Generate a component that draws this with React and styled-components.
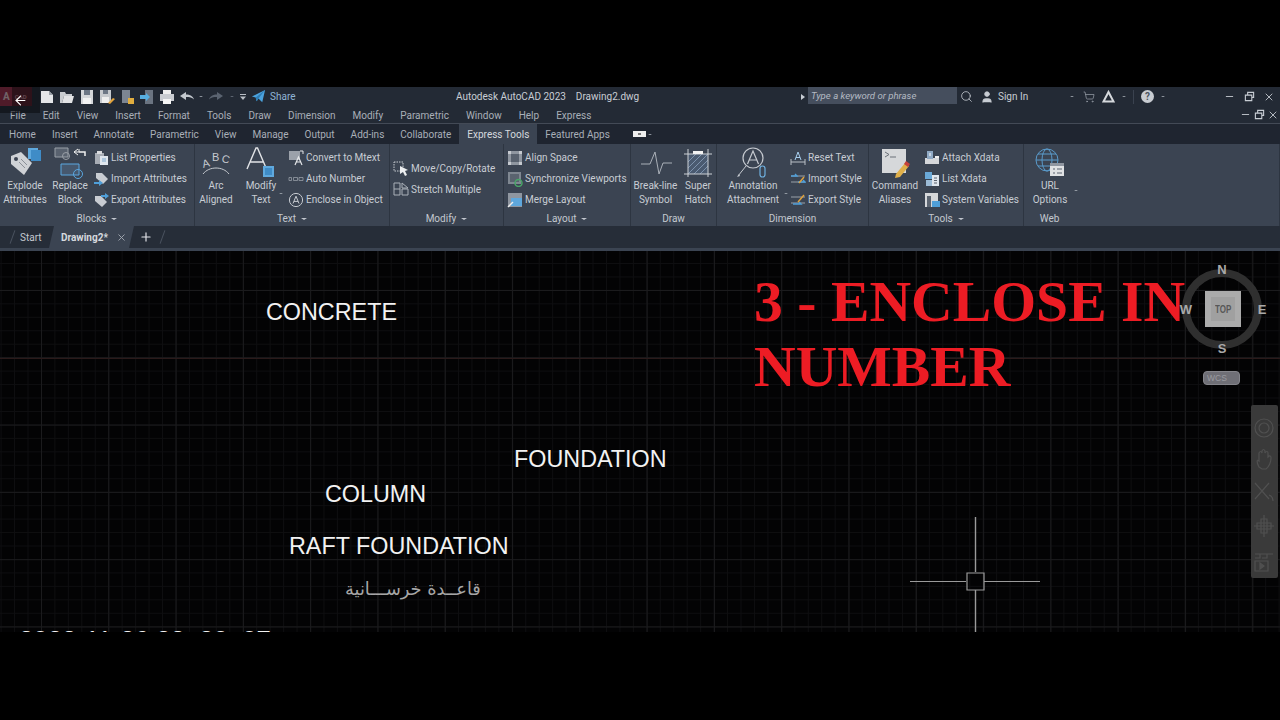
import React from 'react';
import styled, { createGlobalStyle } from 'styled-components';
import { ArrowLeft, Search, User, ShoppingCart, X, Plus, Minus } from 'lucide-react';

const GlobalStyle = createGlobalStyle`
  html, body { margin: 0; background: #000; }
  body { font-family: Roboto, "Open Sans", "Liberation Sans", sans-serif; color: #c8cdd4; }
`;

const Page = styled.div`
  width: 1280px;
  height: 720px;
  background: #000;
  display: flex;
  flex-direction: column;
  padding-top: 87px;
  box-sizing: border-box;
  position: relative;
  overflow: hidden;
`;
const BackOverlay = styled.div`
  position: absolute;
  left: 0;
  top: 87px;
  width: 40px;
  height: 26px;
  background: rgba(10, 10, 12, 0.55);
  display: flex;
  align-items: center;
  justify-content: center;
  color: #fff;
`;
const TitleBar = styled.div`
  height: 19px;
  background: #232a35;
  display: flex;
  align-items: center;
  font-size: 10px;
`;
const Logo = styled.div`
  width: 32px;
  height: 19px;
  background: linear-gradient(to right, #a5324c 12px, #5a1e2c 12px);
  display: flex;
  align-items: center;
  font-weight: 700;
  color: #eed3d8;
  font-size: 10px;
  padding-left: 3px;
  box-sizing: border-box;
  span { font-size: 6px; margin-left: 5px; color: #c98a97; }
`;
const QuickAccess = styled.div`
  display: flex;
  align-items: center;
  margin-left: 5px;
`;
const QatSlot = styled.div`
  width: ${(p) => p.$w || 20}px;
  height: 19px;
  display: flex;
  align-items: center;
  justify-content: center;
`;
const ShareLabel = styled.span`
  color: #8fb4d6;
  margin-left: 3px;
  width: 24px;
`;
const AppTitle = styled.div`
  margin-left: 162px;
  width: 184px;
  white-space: pre;
  color: #c8cdd4;
`;
const RightTools = styled.div`
  margin-left: 161px;
  display: flex;
  align-items: center;
`;
const SearchBox = styled.div`
  width: 149px;
  height: 17px;
  margin: 0 0 2px 3px;
  background: #454e5d;
  font-style: italic;
  font-size: 9.6px;
  color: #b4bac3;
  display: flex;
  align-items: center;
  padding-left: 3px;
  box-sizing: border-box;
`;
const Tri = styled.i`
  display: block;
  width: 0;
  height: 0;
  border-left: ${(p) => p.$s || 3.5}px solid transparent;
  border-right: ${(p) => p.$s || 3.5}px solid transparent;
  border-top: ${(p) => (p.$s || 3.5) * 0.8}px solid ${(p) => p.$c || '#aeb4bd'};
`;
const RightTri = styled.i`
  display: block;
  width: 0;
  height: 0;
  border-top: 3px solid transparent;
  border-bottom: 3px solid transparent;
  border-left: 4px solid #c8cdd4;
`;
const ToolSlot = styled.div`
  width: ${(p) => p.$w}px;
  height: 19px;
  display: flex;
  align-items: center;
  justify-content: center;
  color: #c3c8cf;
`;
const SignIn = styled.span`
  width: 69px;
  color: #c8cdd4;
`;
const Divider = styled.i`
  display: block;
  width: 1px;
  height: 14px;
  background: #3a424f;
`;
const HelpDot = styled.div`
  width: 13px;
  height: 13px;
  border-radius: 50%;
  background: #c8ccd2;
  color: #4c5460;
  font-size: 10px;
  font-weight: 700;
  line-height: 13px;
  text-align: center;
`;
const MenuRow = styled.div`
  height: 18px;
  background: #232a35;
  border-bottom: 1px solid #434a56;
  box-sizing: border-box;
  display: flex;
  align-items: center;
  padding: 1px 0 0 10px;
  gap: 17px;
  font-size: 10px;
  color: #a9afb8;
  position: relative;
`;
const InnerControls = styled.div`
  position: absolute;
  right: 0;
  top: 0;
  height: 17px;
  display: flex;
  align-items: center;
`;
const TabRow = styled.div`
  height: 20px;
  background: #1f2530;
  display: flex;
  align-items: stretch;
  padding-left: 1px;
  font-size: 10px;
  color: #a9afb8;
`;
const Tab = styled.div`
  padding: 1px 8px 0;
  display: flex;
  align-items: center;
  background: ${(p) => (p.$active ? '#3b4452' : 'transparent')};
  color: ${(p) => (p.$active ? '#d5d9de' : '#a9afb8')};
`;
const TabExtra = styled.div`
  margin-left: 15px;
  display: flex;
  align-items: center;
  gap: 2px;
`;
const WhiteChip = styled.i`
  display: flex;
  align-items: center;
  justify-content: center;
  width: 13px;
  height: 6px;
  background: #eee;
  &::before {
    content: '';
    width: 3px;
    height: 2px;
    background: #777;
  }
`;
const Ribbon = styled.div`
  height: 82px;
  background: #3b4452;
  display: flex;
`;
const Panel = styled.div`
  width: ${(p) => p.$w}px;
  flex: ${(p) => (p.$fill ? '1' : 'none')};
  box-sizing: border-box;
  border-right: 1px solid #2d3541;
  display: flex;
  flex-direction: column;
`;
const PanelBody = styled.div`
  height: 67px;
  padding-top: 3px;
  box-sizing: border-box;
  display: flex;
`;
const PanelTitle = styled.div`
  height: 15px;
  padding-top: 1px;
  margin-left: ${(p) => (p.$web ? '-204px' : '0')};
  display: flex;
  align-items: center;
  justify-content: center;
  gap: 5px;
  font-size: 10px;
  color: #c3c8cf;
`;
const LargeButton = styled.div`
  width: ${(p) => p.$w}px;
  flex: none;
  display: flex;
  flex-direction: column;
  align-items: center;
  position: relative;
`;
const LargeIcon = styled.div`
  height: 32px;
  display: flex;
  align-items: center;
  justify-content: center;
`;
const LargeLabel = styled.div`
  font-size: 10px;
  line-height: 14px;
  text-align: center;
  white-space: nowrap;
  color: #c8cdd4;
`;
const CaretSpot = styled.div`
  position: absolute;
  right: ${(p) => p.$r}px;
  top: ${(p) => p.$t}px;
`;
const SmallColumn = styled.div`
  margin-left: ${(p) => p.$ml || 3}px;
  display: flex;
  flex-direction: column;
  justify-content: center;
  height: 63px;
`;
const SmallRow = styled.div`
  height: 21px;
  display: flex;
  align-items: center;
  gap: 2px;
  font-size: 10px;
  white-space: nowrap;
  color: #c8cdd4;
`;
const SmallIcon = styled.div`
  width: 16px;
  height: 16px;
  flex: none;
  display: flex;
  align-items: center;
  justify-content: center;
`;
const DocBar = styled.div`
  height: 22px;
  background: #262d38;
  display: flex;
  align-items: center;
  font-size: 10px;
  color: #c3c8cf;
`;
const Slash = styled.i`
  display: block;
  width: 1px;
  height: 14px;
  background: #4a525f;
  transform: rotate(20deg);
  margin-left: ${(p) => p.$ml}px;
`;
const StartTab = styled.span`
  margin-left: 7px;
  width: 29px;
`;
const ActiveDoc = styled.div`
  width: 85px;
  height: 22px;
  background: #3b4452;
  clip-path: polygon(5px 0, 100% 0, calc(100% - 5px) 100%, 0 100%);
  display: flex;
  align-items: center;
  padding-left: 12px;
  box-sizing: border-box;
  font-weight: 700;
  color: #d5d9de;
  gap: 8px;
`;
const PlusSlot = styled.div`
  margin-left: 5px;
  width: 15px;
  display: flex;
  color: #e4e6ea;
`;
const Strip = styled.div`
  height: 3px;
  background: #3b4452;
`;
const Canvas = styled.div`
  height: 381px;
  position: relative;
  overflow: hidden;
  background-color: #030304;
  background-image:
    linear-gradient(#2b1a1a, #2b1a1a),
    linear-gradient(to right, #1b1b1d 1px, transparent 1px),
    linear-gradient(to bottom, #1b1b1d 1px, transparent 1px),
    linear-gradient(to right, #0e0e10 1px, transparent 1px),
    linear-gradient(to bottom, #0e0e10 1px, transparent 1px);
  background-size: 100% 1px, 67.3px 100%, 100% 67.3px, 13.46px 100%, 100% 13.46px;
  background-position: 0 107px, 41px 0, 0 39px, 0.6px 0, 0 12px;
  background-repeat: no-repeat, repeat, repeat, repeat, repeat;
`;
const DrawnText = styled.div`
  position: absolute;
  left: ${(p) => p.$x}px;
  top: ${(p) => p.$y}px;
  font-family: "Liberation Sans", Arial, sans-serif;
  font-size: 23.35px;
  line-height: 1;
  color: #f2f2f2;
  white-space: nowrap;
`;
const ArabicText = styled(DrawnText)`
  font-family: "DejaVu Sans", "Liberation Sans", sans-serif;
  font-size: 17.8px;
  color: #a6a6a6;
`;
const DateText = styled(DrawnText)`
  font-size: 25.8px;
`;
const Heading = styled.div`
  position: absolute;
  left: 754px;
  top: 18px;
  font-family: "Liberation Serif", "Times New Roman", serif;
  font-weight: 700;
  font-size: 57.7px;
  line-height: 65px;
  color: #ed1c24;
  white-space: nowrap;
`;
const Compass = styled.div`
  position: absolute;
  left: 1182px;
  top: 18px;
  width: 80px;
  height: 80px;
  box-sizing: border-box;
  border: 8px solid rgba(50, 50, 50, 0.95);
  border-radius: 50%;
`;
const CompassLetter = styled.span`
  position: absolute;
  left: ${(p) => p.$x}px;
  top: ${(p) => p.$y}px;
  width: 16px;
  text-align: center;
  font-family: "Liberation Sans", sans-serif;
  font-size: 13px;
  font-weight: 700;
  line-height: 14px;
  color: #a9a9a9;
`;
const CubeTop = styled.div`
  position: absolute;
  left: 1205px;
  top: 40px;
  width: 36px;
  height: 36px;
  background: #ababab;
  display: flex;
  align-items: center;
  justify-content: center;
  font-family: "Liberation Sans", sans-serif;
  font-weight: 700;
  font-size: 10px;
  color: #575757;
  &::before {
    content: '';
    position: absolute;
    inset: 6px;
    background: #a0a0a0;
  }
  span { position: relative; transform: scaleX(0.8); }
`;
const WcsPill = styled.div`
  position: absolute;
  left: 1203px;
  top: 120px;
  width: 37px;
  height: 14px;
  box-sizing: border-box;
  border: 1px solid #85858b;
  border-radius: 4px;
  background: #6f6f76;
  font-family: "Liberation Sans", sans-serif;
  font-size: 8.5px;
  line-height: 12px;
  color: #9a9aa0;
  padding-left: 3px;
`;
const NavBar = styled.div`
  position: absolute;
  left: 1251px;
  top: 154px;
  width: 27px;
  height: 173px;
  border-radius: 2px;
  background: #3a3a3a;
`;
const Overlay = styled.svg`
  position: absolute;
  left: 0;
  top: 0;
  pointer-events: none;
`;

const S = ({ w = 16, h = 16, vb = '0 0 16 16', children }) => (
  <svg width={w} height={h} viewBox={vb} fill="none">{children}</svg>
);

const qat = {
  newFile: <S><path d="M2 2h8l4 4v8H2z" fill="#e4e6e9" /><path d="M10 2v4h4" fill="#9aa0a8" /></S>,
  open: <S><path d="M1 3h5l1 2h6v2H5l-2 7H1z" fill="#c9ccd0" /><path d="M5 7h10l-2 7H3z" fill="#e2e3e5" /></S>,
  save: <S><path d="M2 1h12v14H2z" fill="#d5d7da" /><path d="M5 1h6v5H5z" fill="#6d7785" /><path d="M4 9h8v6H4z" fill="#f2f2f2" /></S>,
  saveAs: <S><path d="M1 1h11v13H1z" fill="#c6c9cd" /><path d="M4 1h5v4H4z" fill="#6d7785" /><path d="M3 8h7v6H3z" fill="#eee" /><path d="M9 14l5-5 2 1-5 5z" fill="#e2a33c" /></S>,
  phone: <S><path d="M3 1h8v13H3z" fill="#7c8592" /><path d="M9 9h6v6H9z" fill="#e0ad3f" /></S>,
  phoneIn: <S><path d="M6 1h8v14H6z" fill="#6b7481" /><path d="M1 6h6V4l4 4-4 4v-2H1z" fill="#57aee0" /></S>,
  print: <S><path d="M4 1h8v4H4z" fill="#eee" /><path d="M1 5h14v7H1z" fill="#c9ccd1" /><path d="M4 10h8v5H4z" fill="#f5f5f5" /></S>,
  undo: <S><path d="M1 7l6-4v2.5c4 0 7 1.5 8 5-2-2-4-2.5-8-2.5V11z" fill="#c3c8ce" /></S>,
  redo: <S><path d="M15 7l-6-4v2.5c-4 0-7 1.5-8 5 2-2 4-2.5 8-2.5V11z" fill="#5a6370" /></S>,
  more: <S w={8} h={8} vb="0 0 8 8"><path d="M1 1h6v1H1zM1 3.5h6L4 7z" fill="#b8bdc4" /></S>,
  share: <S w={15} h={15}><path d="M1 8L15 1l-3 13-4-4-2 3-1-4z" fill="#4ba3de" /><path d="M5 9l10-8-7 9-2 3z" fill="#2e7db5" /></S>,
};

const small = {
  list: <S><path d="M2 3h9v11H2z" fill="#a8adb5" /><path d="M4 1h5v3H4z" fill="#d9dbde" /><path d="M7 6h8v9H7z" fill="#dfe6ee" /><path d="M9 9h4M9 11h4" stroke="#7aa5c9" /></S>,
  importA: <S><path d="M3 2h6l6 6-5 5-7-6z" fill="#c8ccd2" /><path d="M1 11h5v-2l4 3-4 3v-2H1z" fill="#4f9fd9" /></S>,
  exportA: <S><path d="M2 4h6l6 6-5 5-7-6z" fill="#c8ccd2" /><path d="M8 3h4V1l4 3-4 3V5H8z" fill="#4f9fd9" /></S>,
  mtext: <S><path d="M1 1h11v9H1z" fill="#9ba1aa" /><path d="M7 15l3.5-8L14 15M8.5 12h4" stroke="#e4e6e9" strokeWidth="1.2" /><path d="M12 1h3v3" stroke="#e4e6e9" /></S>,
  auto: <S><path d="M1 6.5h2.5v3H1zM5.5 6.5h4v3h-4zM11 6.5h4v3h-4z" stroke="#a4a9b1" strokeWidth="0.7" /></S>,
  enclose: <S><circle cx="8" cy="8" r="6.6" stroke="#c6cad0" strokeWidth="1" /><path d="M5 11.5L8 4.2l3 7.3M6 9.4h4" stroke="#c6cad0" strokeWidth="1" /></S>,
  move: <S><path d="M1 2h9v9H1z" stroke="#c6cad0" strokeDasharray="1.5 1" /><path d="M7 6l8 4-3 1 2 4-2 1-2-4-3 2z" fill="#eceef0" /></S>,
  stretch: <S><path d="M1 2h6v12H1zM9 8h6v6H9z M1 8h6" stroke="#aab0b8" /><path d="M9 2l6 5H9z" stroke="#aab0b8" /></S>,
  align: <S><path d="M1 1h14v14H1z" fill="#8f96a0" /><path d="M4 4h8v8H4z" fill="#59626f" /><path d="M1 1h3v3H1zM12 1h3v3h-3zM1 12h3v3H1zM12 12h3v3h-3z" fill="#c6cad0" /></S>,
  sync: <S><path d="M1 1h13v12H1z" fill="#7f8791" /><path d="M3 3h9v8H3z" fill="#5a636f" /><circle cx="11.5" cy="12" r="3.5" stroke="#49a568" strokeWidth="1.5" /></S>,
  merge: <S><path d="M1 1h14v14H1z" fill="#8f96a0" /><path d="M4 6h11v8H4z" fill="#5ea7dc" /><path d="M1 15l5-5" stroke="#eee" strokeWidth="1.5" /></S>,
  reset: <S><path d="M1 12h14M1 9v6M15 9v6" stroke="#b9bec5" /><path d="M5 10l3-8 3 8M6 7.5h4" stroke="#a8cfee" /></S>,
  importS: <S><path d="M1 5h14M1 11h14" stroke="#9aa0a8" /><path d="M1 5h6l-2-2M8 11h7l-2-2" stroke="#4f9fd9" strokeWidth="1.4" /><path d="M9 12l5-6" stroke="#e2a33c" strokeWidth="1.4" /></S>,
  exportS: <S><path d="M1 11h14M1 5h14" stroke="#9aa0a8" /><path d="M3 12h8l-2-2" stroke="#4f9fd9" strokeWidth="1.4" /><path d="M8 10l6-7" stroke="#e2a33c" strokeWidth="1.4" /></S>,
  attach: <S><path d="M1 8h14v6H1z" fill="#d5d7da" /><path d="M3 1h6v8H3z" fill="#8fa9c4" /><path d="M6 3v3" stroke="#fff" /><path d="M11 6h4v2h-4z" fill="#eee" /></S>,
  listX: <S><path d="M1 1h7v7H1z" fill="#6aa9d8" /><path d="M2 9h6v6H2z" fill="#9bbad5" /><path d="M8 4h7v11H8z" fill="#dfe6ee" /><path d="M10 7h3M10 9.5h3M10 12h3" stroke="#5a636f" /></S>,
  sysvar: <S><path d="M1 1h13v14H1z" fill="#d5d7da" /><path d="M3 4h4v11H3z" fill="#5c6571" /><path d="M8 9h8v6H8z" fill="#4f9fd9" /></S>,
};

const large = {
  explode: (
    <S w={34} h={32} vb="0 0 34 32">
      <path d="M3 9l10-4 11 11-8 12-13-11z" fill="#cfd2d6" />
      <circle cx="8" cy="12" r="2" fill="#3b4452" />
      <path d="M11 15l6 6M13 12l6 6" stroke="#8a9098" />
      <path d="M20 1h10v11H20z" fill="#5fa9de" />
      <path d="M23 3h10v11H23z" fill="#3f8cc7" />
    </S>
  ),
  replace: (
    <S w={34} h={34} vb="0 0 34 34">
      <path d="M2 2h13v9H2z" stroke="#9aa0a8" fill="#59626f" />
      <circle cx="13" cy="10" r="3.5" stroke="#9aa0a8" />
      <path d="M21 6h5V3M21 6l4-3M21 6l4 3" stroke="#f0f0f0" />
      <path d="M26 6h6v4" stroke="#f0f0f0" strokeWidth="1.5" />
      <path d="M8 18h18v11H8z" stroke="#5aa7e0" fill="#46586e" />
      <circle cx="25" cy="28" r="4.5" stroke="#5aa7e0" />
    </S>
  ),
  arc: (
    <svg width="34" height="30" viewBox="0 0 34 30" fill="none">
      <path d="M4 26C10 18 24 18 30 26" stroke="#c6cad0" strokeWidth="1" />
      <text x="3" y="19" fontSize="11" fill="#c6cad0" fontFamily="Liberation Sans" transform="rotate(-15 7 15)">A</text>
      <text x="13" y="13" fontSize="11" fill="#c6cad0" fontFamily="Liberation Sans">B</text>
      <text x="23" y="15" fontSize="11" fill="#c6cad0" fontFamily="Liberation Sans" transform="rotate(15 27 11)">C</text>
    </svg>
  ),
  modify: (
    <svg width="34" height="34" viewBox="0 0 34 34" fill="none">
      <path d="M3 23L12 2h1.5l9 21M6.5 16h13" stroke="#e2e4e7" strokeWidth="1.4" />
      <path d="M19 20h11v11H19z" fill="#5fa9de" />
      <path d="M21 22h7v7h-7z" fill="#3f8cc7" />
    </svg>
  ),
  breakline: (
    <S w={34} h={28} vb="0 0 34 28">
      <path d="M2 15h9l5-12 4 22 4-11h9" stroke="#aab0b8" />
    </S>
  ),
  hatch: (
    <S w={30} h={30} vb="0 0 30 30">
      <path d="M5 6h20v20H5z" fill="#4a5a70" />
      <path d="M5 14l8-8M5 20l14-14M5 26L25 6M11 26L25 12M17 26l8-8" stroke="#7e93ad" />
      <path d="M1 6h28M1 26h28M5 1v28M25 1v28" stroke="#ccd0d5" />
      <path d="M10 3h10v3H10z" fill="#f2f2f2" />
    </S>
  ),
  annotation: (
    <svg width="34" height="34" viewBox="0 0 34 34" fill="none">
      <circle cx="17" cy="12" r="10" stroke="#c6cad0" strokeWidth="1.2" />
      <path d="M11.5 18L17 5l5.5 13M13.5 14h7" stroke="#c6cad0" strokeWidth="1.2" />
      <path d="M10 20L2 30" stroke="#c6cad0" />
      <path d="M1 31l3-1-1-2z" fill="#c6cad0" />
      <rect x="24" y="20" width="5" height="11" rx="2.5" stroke="#6fb0df" strokeWidth="1.2" />
    </svg>
  ),
  command: (
    <svg width="30" height="30" viewBox="0 0 30 30" fill="none">
      <path d="M2 1h24v24H2z" fill="#d6d8da" />
      <path d="M5 4l4 2.5L5 9M10 9h6" stroke="#6a7078" />
      <path d="M16 26l9-11 4 3-9 11-5 1z" fill="#e0b04a" />
      <path d="M24 16l2-3 4 3-2 3z" fill="#c5423c" />
    </svg>
  ),
  globe: (
    <S w={30} h={30} vb="0 0 30 30">
      <circle cx="12" cy="12" r="11" stroke="#5a9bcb" />
      <ellipse cx="12" cy="12" rx="5" ry="11" stroke="#5a9bcb" />
      <path d="M1 12h22M3 6h18M3 18h18" stroke="#5a9bcb" />
      <path d="M15 15h14v13H15z" fill="#e0e2e4" />
      <path d="M15 15h14v3H15z" fill="#8f96a0" />
      <path d="M18 21h2M22 21h5M18 25h2M22 25h5" stroke="#5a636f" />
    </S>
  ),
};

const menuItems = ['File', 'Edit', 'View', 'Insert', 'Format', 'Tools', 'Draw', 'Dimension', 'Modify', 'Parametric', 'Window', 'Help', 'Express'];
const tabItems = ['Home', 'Insert', 'Annotate', 'Parametric', 'View', 'Manage', 'Output', 'Add-ins', 'Collaborate', 'Express Tools', 'Featured Apps'];

const panels = [
  {
    title: 'Blocks', w: 195, caret: true,
    large: [
      { icon: 'explode', w: 50, lines: ['Explode', 'Attributes'] },
      { icon: 'replace', w: 40, lines: ['Replace', 'Block'] },
    ],
    small: [['list', 'List Properties'], ['importA', 'Import Attributes'], ['exportA', 'Export Attributes']],
  },
  {
    title: 'Text', w: 195, caret: true,
    large: [
      { icon: 'arc', w: 42, lines: ['Arc', 'Aligned'] },
      { icon: 'modify', w: 48, lines: ['Modify', 'Text'], arrow: [2, 46] },
    ],
    small: [['mtext', 'Convert to Mtext'], ['auto', 'Auto Number'], ['enclose', 'Enclose in Object']],
  },
  {
    title: 'Modify', w: 114, caret: true, large: [],
    small: [['move', 'Move/Copy/Rotate'], ['stretch', 'Stretch Multiple']],
  },
  {
    title: 'Layout', w: 127, caret: true, large: [],
    small: [['align', 'Align Space'], ['sync', 'Synchronize Viewports'], ['merge', 'Merge Layout']],
  },
  {
    title: 'Draw', w: 86,
    large: [
      { icon: 'breakline', w: 49, lines: ['Break-line', 'Symbol'] },
      { icon: 'hatch', w: 36, lines: ['Super', 'Hatch'] },
    ],
    small: [],
  },
  {
    title: 'Dimension', w: 152,
    large: [{ icon: 'annotation', w: 72, lines: ['Annotation', 'Attachment'], arrow: [1, 46] }],
    small: [['reset', 'Reset Text'], ['importS', 'Import Style'], ['exportS', 'Export Style']],
    ml: 1,
  },
  {
    title: 'Tools', w: 155, caret: true,
    large: [{ icon: 'command', w: 52, lines: ['Command', 'Aliases'] }],
    small: [['attach', 'Attach Xdata'], ['listX', 'List Xdata'], ['sysvar', 'System Variables']],
  },
  {
    title: 'Web', w: 256, fill: true, web: true,
    large: [{ icon: 'globe', w: 52, lines: ['URL', 'Options'], arrow: [-2, 43] }],
    small: [],
  },
];

const RibbonPanel = ({ panel }) => (
  <Panel $w={panel.w} $fill={panel.fill}>
    <PanelBody>
      {panel.large.map((b) => (
        <LargeButton key={b.lines[0]} $w={b.w}>
          <LargeIcon>{large[b.icon]}</LargeIcon>
          <LargeLabel>{b.lines[0]}<br />{b.lines[1]}</LargeLabel>
          {b.arrow && <CaretSpot $r={b.arrow[0]} $t={b.arrow[1]}><Tri $s={2} /></CaretSpot>}
        </LargeButton>
      ))}
      {panel.small.length > 0 && (
        <SmallColumn $ml={panel.ml}>
          {panel.small.map(([icon, label]) => (
            <SmallRow key={label}>
              <SmallIcon>{small[icon]}</SmallIcon>
              {label}
            </SmallRow>
          ))}
        </SmallColumn>
      )}
    </PanelBody>
    <PanelTitle $web={panel.web}>
      {panel.title}
      {panel.caret && <Tri $c="#c3c8cf" />}
    </PanelTitle>
  </Panel>
);

const WinControls = ({ gap, size }) => (
  <>
    <ToolSlot $w={gap}><Minus size={size} strokeWidth={2} /></ToolSlot>
    <ToolSlot $w={gap}>
      <svg width={size} height={size} viewBox="0 0 12 12" fill="none" stroke="#c8cdd4" strokeWidth="1.2">
        <path d="M1.5 4.5h7v6h-7zM4 4.5V1.5h6.5V7H8.5" />
      </svg>
    </ToolSlot>
    <ToolSlot $w={gap}><X size={size + 1} strokeWidth={1.8} /></ToolSlot>
  </>
);

export default function App() {
  return (
    <Page>
      <GlobalStyle />
      <TitleBar>
        <Logo>A<span>CAD</span></Logo>
        <QuickAccess>
          <QatSlot>{qat.newFile}</QatSlot>
          <QatSlot>{qat.open}</QatSlot>
          <QatSlot>{qat.save}</QatSlot>
          <QatSlot>{qat.saveAs}</QatSlot>
          <QatSlot>{qat.phone}</QatSlot>
          <QatSlot>{qat.phoneIn}</QatSlot>
          <QatSlot>{qat.print}</QatSlot>
          <QatSlot>{qat.undo}</QatSlot>
          <QatSlot $w={8}><Tri $s={2} /></QatSlot>
          <QatSlot $w={22}>{qat.redo}</QatSlot>
          <QatSlot $w={9}><Tri $s={2} $c="#707884" /></QatSlot>
          <QatSlot $w={13}>{qat.more}</QatSlot>
          <QatSlot $w={18}>{qat.share}</QatSlot>
        </QuickAccess>
        <ShareLabel>Share</ShareLabel>
        <AppTitle>Autodesk AutoCAD 2023    Drawing2.dwg</AppTitle>
        <RightTools>
          <RightTri />
          <SearchBox>Type a keyword or phrase</SearchBox>
          <ToolSlot $w={18}><Search size={13} strokeWidth={1.5} /></ToolSlot>
          <ToolSlot $w={23}><User size={14} fill="#c8cdd4" strokeWidth={1.5} /></ToolSlot>
          <SignIn>Sign In</SignIn>
          <ToolSlot $w={9}><Tri $s={2} /></ToolSlot>
          <ToolSlot $w={25}><ShoppingCart size={12} strokeWidth={1.6} color="#8f96a0" /></ToolSlot>
          <ToolSlot $w={14}>
            <svg width="13" height="13" viewBox="0 0 13 13" fill="none" stroke="#d5d8dc" strokeWidth="2"><path d="M6.5 2L1.5 11.5h10z" /></svg>
          </ToolSlot>
          <ToolSlot $w={18}><Tri $s={2} /></ToolSlot>
          <Divider />
          <ToolSlot $w={27}><HelpDot>?</HelpDot></ToolSlot>
          <ToolSlot $w={4}><Tri $s={2} /></ToolSlot>
          <ToolSlot $w={54} />
          <WinControls gap={20} size={11} />
        </RightTools>
      </TitleBar>
      <MenuRow>
        {menuItems.map((m) => <span key={m}>{m}</span>)}
        <InnerControls><WinControls gap={14} size={11} /></InnerControls>
      </MenuRow>
      <TabRow>
        {tabItems.map((t) => <Tab key={t} $active={t === 'Express Tools'}>{t}</Tab>)}
        <TabExtra><WhiteChip /><Tri $s={2} /></TabExtra>
      </TabRow>
      <Ribbon>
        {panels.map((p) => <RibbonPanel key={p.title} panel={p} />)}
      </Ribbon>
      <DocBar>
        <Slash $ml={12} />
        <StartTab>Start</StartTab>
        <ActiveDoc>Drawing2*<X size={11} strokeWidth={2} color="#a4aab2" /></ActiveDoc>
        <PlusSlot><Plus size={14} strokeWidth={2} /></PlusSlot>
        <Slash $ml={8} />
      </DocBar>
      <Strip />
      <Canvas>
        <DrawnText $x={266} $y={50}>CONCRETE</DrawnText>
        <DrawnText $x={514} $y={197}>FOUNDATION</DrawnText>
        <DrawnText $x={325} $y={232}>COLUMN</DrawnText>
        <DrawnText $x={289} $y={284}>RAFT FOUNDATION</DrawnText>
        <ArabicText $x={345} $y={329} dir="rtl">قاعــدة خرســـانية</ArabicText>
        <DateText $x={19} $y={377}>2022-11-26 22: 30: 07</DateText>
        <Heading>3 - ENCLOSE IN<br />NUMBER</Heading>
        <Compass />
        <CompassLetter $x={1214} $y={12}>N</CompassLetter>
        <CompassLetter $x={1214} $y={91}>S</CompassLetter>
        <CompassLetter $x={1178} $y={52}>W</CompassLetter>
        <CompassLetter $x={1254} $y={52}>E</CompassLetter>
        <CubeTop><span>TOP</span></CubeTop>
        <WcsPill>WCS</WcsPill>
        <NavBar>
          <svg width="27" height="173" viewBox="0 0 27 173" fill="none" stroke="#505050" strokeWidth="1.2">
            <circle cx="13" cy="23" r="9" />
            <circle cx="13" cy="23" r="5" />
            <path d="M8 62c-3-6-2-8 0-6V48c1-2 2-2 3 0v-2c1-2 2-2 3 0v2c1-2 3-2 3 0v4c2-2 3-1 3 1 0 4-2 9-5 11h-4z" />
            <path d="M4 78l14 16M18 78L4 94M18 90c3 1 4 3 4 6" />
            <path d="M13 110v22M3 121h20M10 114h6v14h-6zM6 118h14v6H6z" />
            <path d="M4 149h18M4 153h5v-4M11 153h5v-4" />
            <path d="M4 156h13v10H4z" />
            <path d="M9 158l4 3-4 3z" fill="#505050" />
          </svg>
        </NavBar>
        <Overlay width="1280" height="381">
          <g stroke="#9a9a9a" fill="none">
            <path d="M975.5 266v55M975.5 339v42" strokeWidth="1.4" />
            <path d="M910 330.5h56M984 330.5h56" />
            <path d="M967 322h17v17h-17z" strokeWidth="1.2" />
          </g>
        </Overlay>
      </Canvas>
      <BackOverlay><ArrowLeft size={15} strokeWidth={1.8} /></BackOverlay>
    </Page>
  );
}
